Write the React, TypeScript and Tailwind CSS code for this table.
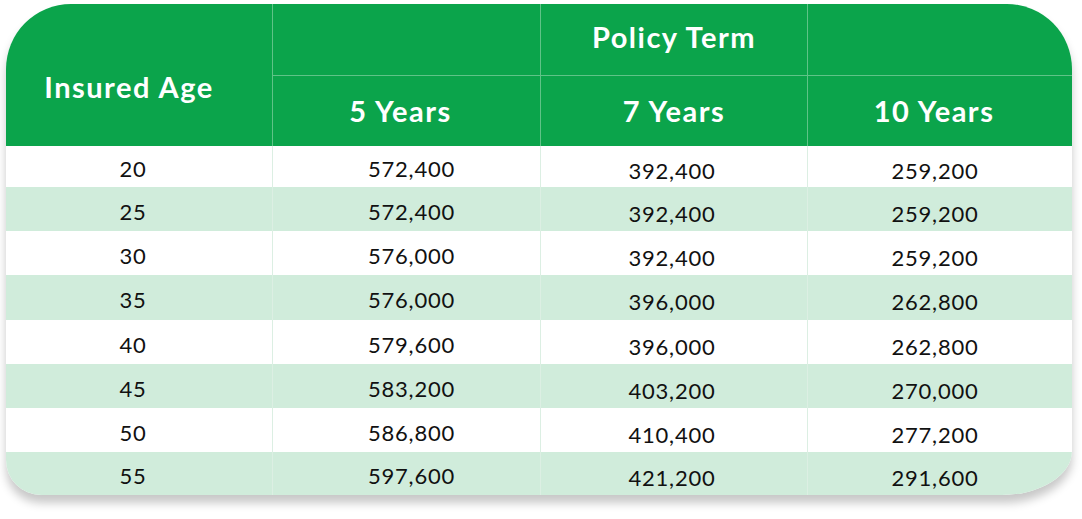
import React from "react";

const rows = [
  { age: "20", y5: "572,400", y7: "392,400", y10: "259,200", h: "h-[41px]", bg: "bg-white" },
  { age: "25", y5: "572,400", y7: "392,400", y10: "259,200", h: "h-[44px]", bg: "bg-[#d0ecdb]" },
  { age: "30", y5: "576,000", y7: "392,400", y10: "259,200", h: "h-[44px]", bg: "bg-white" },
  { age: "35", y5: "576,000", y7: "396,000", y10: "262,800", h: "h-[45px]", bg: "bg-[#d0ecdb]" },
  { age: "40", y5: "579,600", y7: "396,000", y10: "262,800", h: "h-[44px]", bg: "bg-white" },
  { age: "45", y5: "583,200", y7: "403,200", y10: "270,000", h: "h-[44px]", bg: "bg-[#d0ecdb]" },
  { age: "50", y5: "586,800", y7: "410,400", y10: "277,200", h: "h-[44px]", bg: "bg-white" },
  { age: "55", y5: "597,600", y7: "421,200", y10: "291,600", h: "h-[43px]", bg: "bg-[#d0ecdb]" },
];

const cols = "grid grid-cols-[266px_268px_267px_265px]";

export default function App() {
  return (
    <div
      className="w-[1082px] h-[519px] bg-white pl-[6px] pt-[4px]"
      style={{ fontFamily: "Lato, 'Noto Sans', sans-serif" }}
    >
      <div className="w-[1066px] overflow-hidden rounded-tl-[65px] rounded-tr-[65px] rounded-bl-[35px] rounded-br-[70px_44px] shadow-[0_8px_10px_rgba(0,0,0,0.22)]">
        {/* header */}
        <div className={`${cols} grid-rows-[71px_71px] bg-[#0ba44b] text-[29px] font-bold tracking-[1.5px] text-white`}>
          <div className="row-span-2 flex items-center justify-center pt-[24px] pr-[20px]">
            Insured Age
          </div>
          <div className="border-l border-[#5fc387]" />
          <div className="flex items-center justify-center border-l border-[#5fc387] pb-[6px]">
            Policy Term
          </div>
          <div className="border-l border-[#5fc387]" />
          <div className="flex items-center justify-center border-l border-t border-[#5fc387] pr-[12px]">
            5 Years
          </div>
          <div className="flex items-center justify-center border-l border-t border-[#5fc387]">
            7 Years
          </div>
          <div className="flex items-center justify-center border-l border-t border-[#5fc387] pr-[12px]">
            10 Years
          </div>
        </div>

        {/* body */}
        {rows.map((r) => (
          <div key={r.age} className={`${cols} ${r.h} ${r.bg} text-[22px] tracking-[0.8px] text-[#111]`}>
            <div className="flex items-center justify-center pr-[12px] pt-[4px]">{r.age}</div>
            <div className="flex items-center justify-center border-l border-[#dcefe3] pl-[10px] pt-[4px]">
              {r.y5}
            </div>
            <div className="flex items-center justify-center border-l border-[#dcefe3] pr-[4px] pt-[8px]">
              {r.y7}
            </div>
            <div className="flex items-center justify-center border-l border-[#dcefe3] pr-[10px] pt-[8px]">
              {r.y10}
            </div>
          </div>
        ))}
      </div>
    </div>
  );
}
